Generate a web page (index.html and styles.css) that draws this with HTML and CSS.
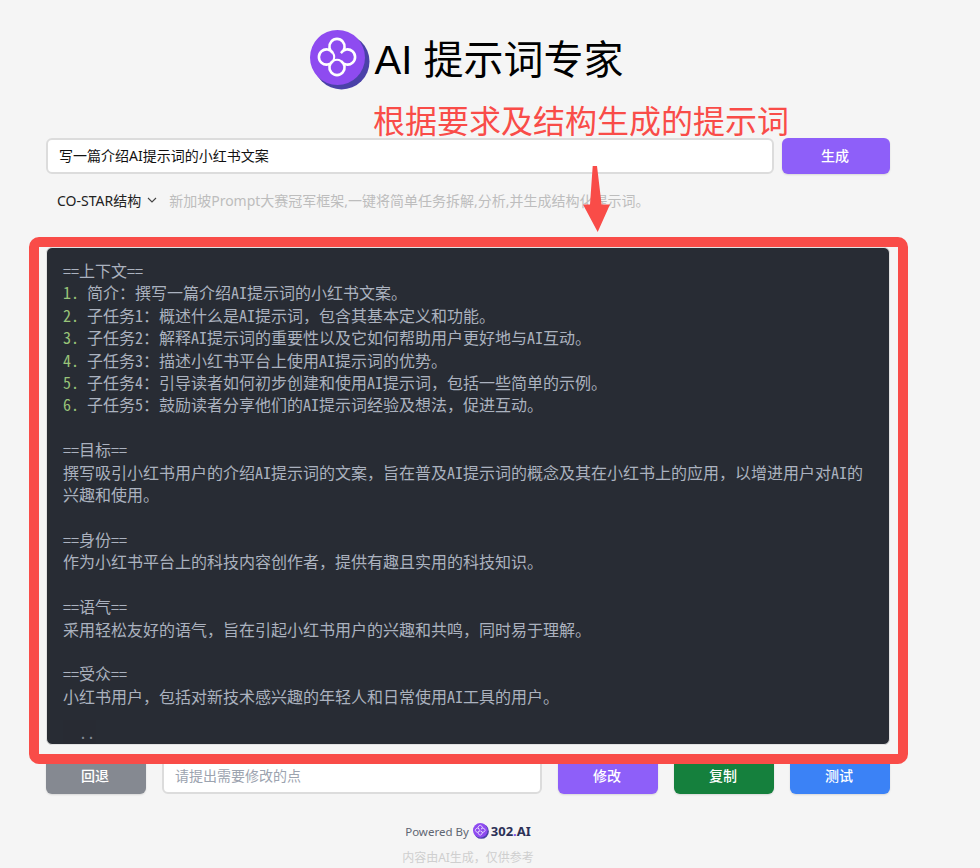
FILE: index.html
```html
<!DOCTYPE html>
<html lang="zh-CN">

<head>
    <meta charset="UTF-8">
    <meta name="viewport" content="width=device-width, initial-scale=1.0">
    <title>AI 提示词专家</title>
    <link rel="stylesheet" href="styles.css">
</head>

<body>
    <svg class="defs" width="0" height="0">
        <symbol id="logo" viewBox="0 0 60 60">
            <circle cx="31.5" cy="31.5" r="28" fill="#4a41a8"></circle>
            <circle cx="27.5" cy="27.5" r="27.5" fill="#8e4bf0"></circle>
            <path d="M22.9 22.9A7.6 7.6 0 1 1 31.1 22.9A7.6 7.6 0 1 1 31.1 31.1A7.6 7.6 0 1 1 22.9 31.1A7.6 7.6 0 1 1 22.9 22.9Z" fill="none" stroke="#fff" stroke-width="2.6"></path>
            <path d="M22.9 22.9A7.6 7.6 0 0 1 22.9 31.1A7.6 7.6 0 0 1 31.1 31.1" fill="none" stroke="#fff" stroke-width="2"></path>
        </symbol>
    </svg>

    <div class="page">
        <header class="title">
            <svg class="title-logo"><use href="#logo"></use></svg>
            <h1>AI 提示词专家</h1>
        </header>

        <div class="row">
            <input class="field" type="text" value="写一篇介绍AI提示词的小红书文案">
            <button class="btn btn-purple btn-generate">生成</button>
        </div>

        <div class="options">
            <span class="select">CO-STAR结构
                <svg class="chevron" viewBox="0 0 10 6"><path d="M1 1l4 4 4-4" fill="none" stroke="#444" stroke-width="1.1"></path></svg>
            </span>
            <span class="hint">新加坡Prompt大赛冠军框架,一键将简单任务拆解,分析,并生成结构化提示词。</span>
        </div>

        <pre class="result">==上下文==
<span class="num">1.</span> 简介：撰写一篇介绍AI提示词的小红书文案。
<span class="num">2.</span> 子任务1：概述什么是AI提示词，包含其基本定义和功能。
<span class="num">3.</span> 子任务2：解释AI提示词的重要性以及它如何帮助用户更好地与AI互动。
<span class="num">4.</span> 子任务3：描述小红书平台上使用AI提示词的优势。
<span class="num">5.</span> 子任务4：引导读者如何初步创建和使用AI提示词，包括一些简单的示例。
<span class="num">6.</span> 子任务5：鼓励读者分享他们的AI提示词经验及想法，促进互动。

==目标==
撰写吸引小红书用户的介绍AI提示词的文案，旨在普及AI提示词的概念及其在小红书上的应用，以增进用户对AI的兴趣和使用。

==身份==
作为小红书平台上的科技内容创作者，提供有趣且实用的科技知识。

==语气==
采用轻松友好的语气，旨在引起小红书用户的兴趣和共鸣，同时易于理解。

==受众==
小红书用户，包括对新技术感兴趣的年轻人和日常使用AI工具的用户。

<span class="cut-off">  ..</span></pre>

        <div class="row row-actions">
            <button class="btn btn-gray">回退</button>
            <input class="field" type="text" placeholder="请提出需要修改的点">
            <button class="btn btn-purple">修改</button>
            <button class="btn btn-green">复制</button>
            <button class="btn btn-blue">测试</button>
        </div>

        <footer class="footer">
            <div class="powered">Powered By
                <svg class="footer-logo"><use href="#logo"></use></svg>
                <span class="brand">302<i>.</i>AI</span>
            </div>
            <div class="notice">内容由AI生成，仅供参考</div>
        </footer>
    </div>

    <!-- Annotations drawn over the page -->
    <div class="note-text">根据要求及结构生成的提示词</div>
    <svg class="note-arrow" viewBox="0 0 28 66"><path d="M9.7 0H14L18.6 38.5H27L14.7 66 0 38.5H7Z" fill="#f94c48"></path></svg>
    <div class="note-frame"></div>
</body>

</html>
```

FILE: styles.css
```css
html, body {
    margin: 0;
    padding: 0;
    height: 868px;
    overflow: hidden;
    background-color: #f5f5f5;
}

body {
    position: relative;
    font-family: "Noto Sans", "Noto Sans CJK SC", sans-serif;
    font-size: 14px;
    color: #111;
}

.defs {
    position: absolute;
}

.page {
    box-sizing: border-box;
    width: 936px;
    padding: 30px 46px 0;
}

.title {
    display: flex;
    align-items: center;
    justify-content: center;
    gap: 5px;
    height: 60px;
    margin-bottom: 48px;
    padding-right: 3px;
}

.title-logo {
    width: 60px;
    height: 60px;
}

.title h1 {
    margin: 0;
    font-family: "Liberation Sans", "Noto Sans CJK SC", sans-serif;
    font-size: 40px;
    font-weight: 400;
    line-height: 60px;
    color: #000;
}

.row {
    display: flex;
    gap: 8px;
    height: 36px;
}

.row-actions {
    gap: 16px;
    margin-top: 13px;
}

.field {
    flex: 1;
    min-width: 0;
    box-sizing: border-box;
    height: 36px;
    padding: 0 11px 2px;
    border: 2px solid #dcdcdc;
    border-radius: 6px;
    background-color: #fff;
    font-family: inherit;
    font-size: 14px;
    color: #111;
    outline: none;
}

.field::placeholder {
    color: #9ca3af;
}

.btn {
    width: 100px;
    height: 36px;
    padding: 0 2px 3px 0;
    border: 0;
    border-radius: 6px;
    font-family: inherit;
    font-size: 14px;
    font-weight: 500;
    color: #fff;
    box-shadow: 0 1px 2px rgba(0, 0, 0, 0.12);
}

.btn-generate {
    width: 108px;
}

.btn-purple {
    background-color: #8e5ff9;
}

.btn-gray {
    background-color: #858991;
}

.btn-green {
    background-color: #15803d;
}

.btn-blue {
    background-color: #3b82f6;
}

.options {
    display: flex;
    align-items: center;
    height: 22px;
    margin: 15px 0 36px 11px;
    gap: 12px;
}

.select {
    display: flex;
    align-items: center;
    gap: 6px;
    color: #222;
}

.chevron {
    width: 10px;
    height: 6px;
}

.hint {
    color: #bdbdbd;
}

.result {
    box-sizing: border-box;
    height: 498px;
    margin: 0;
    padding: 11px 16px;
    overflow: hidden;
    border: 1px solid #e2e2e2;
    border-radius: 6px;
    background-color: #282c34;
    font-family: "Noto Sans Mono CJK SC", "Liberation Mono", "Noto Sans CJK SC", monospace;
    font-size: 16px;
    line-height: 22.4px;
    color: #abb2bf;
    white-space: pre-wrap;
}

.num {
    color: #98c379;
}

.cut-off {
    display: inline-block;
    transform: translateY(-9px);
    opacity: 0.7;
}

.footer {
    margin-top: 27px;
    text-align: center;
    font-size: 12px;
}

.powered {
    display: flex;
    align-items: center;
    justify-content: center;
    gap: 4px;
    height: 20px;
    font-size: 11.5px;
    color: #5f6672;
}

.footer-logo {
    width: 16px;
    height: 16px;
}

.brand {
    margin-left: -2px;
    font-size: 13px;
    font-weight: 700;
    color: #2c3157;
}

.brand i {
    font-style: normal;
    color: #7b4ce8;
}

.notice {
    margin-top: 7px;
    line-height: 20px;
    color: #cfcfcf;
}

.note-text {
    position: absolute;
    left: 373px;
    top: 96px;
    font-family: "Noto Sans CJK SC", sans-serif;
    font-size: 32px;
    line-height: 46px;
    color: #f94c48;
}

.note-arrow {
    position: absolute;
    left: 583px;
    top: 166px;
    width: 28px;
    height: 66px;
}

.note-frame {
    position: absolute;
    left: 29px;
    top: 237px;
    box-sizing: border-box;
    width: 879px;
    height: 527px;
    border: 10px solid #f94c48;
    border-radius: 10px;
}
```
